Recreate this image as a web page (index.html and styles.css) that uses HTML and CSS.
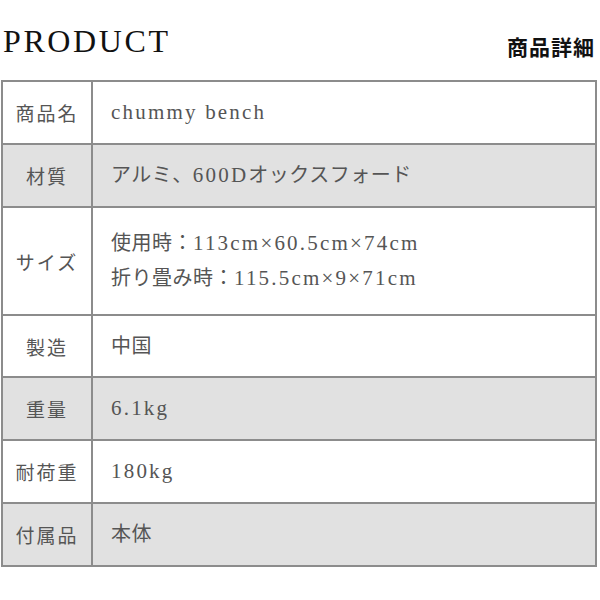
FILE: index.html
```html
<!DOCTYPE html>
<html lang="ja">
<head>
<meta charset="utf-8">
<title>PRODUCT</title>
<link rel="stylesheet" href="styles.css">
</head>
<body>
<header class="head">
  <h1 class="title">PRODUCT</h1>
  <h2 class="subtitle">商品詳細</h2>
</header>
<table class="spec">
  <tr class="row">
    <th class="label">商品名</th>
    <td class="value"><span class="en">chummy bench</span></td>
  </tr>
  <tr class="row alt">
    <th class="label">材質</th>
    <td class="value">アルミ、<span class="en">600D</span>オックスフォード</td>
  </tr>
  <tr class="row tall">
    <th class="label">サイズ</th>
    <td class="value">使用時：<span class="en">113cm×60.5cm×74cm</span><br>折り畳み時：<span class="en">115.5cm×9×71cm</span></td>
  </tr>
  <tr class="row short">
    <th class="label">製造</th>
    <td class="value">中国</td>
  </tr>
  <tr class="row alt">
    <th class="label">重量</th>
    <td class="value"><span class="en">6.1kg</span></td>
  </tr>
  <tr class="row">
    <th class="label">耐荷重</th>
    <td class="value"><span class="en">180kg</span></td>
  </tr>
  <tr class="row alt">
    <th class="label">付属品</th>
    <td class="value">本体</td>
  </tr>
</table>
</body>
</html>
```
FILE: styles.css
```css
html, body {
  margin: 0;
  padding: 0;
  background: #fff;
}
body {
  width: 600px;
  font-family: "Liberation Serif", "Noto Sans CJK JP", serif;
}
.head {
  box-sizing: border-box;
  height: 80px;
  display: flex;
  justify-content: space-between;
  align-items: flex-end;
  padding: 0 5px 23px 3px;
}
.title {
  margin: 0;
  font-size: 32px;
  line-height: 32px;
  font-weight: normal;
  letter-spacing: 2.6px;
  color: #111;
}
.subtitle {
  margin: 0 0 -3px;
  font-size: 21px;
  line-height: 24px;
  font-weight: bold;
  color: #111;
  letter-spacing: 1px;
}
.spec {
  margin-left: 1px;
  width: 596px;
  border-collapse: collapse;
  color: #555;
  font-size: 19px;
  letter-spacing: 2px;
}
.row {
  height: 63px;
}
.row.short {
  height: 62px;
}
.row.tall {
  height: 108px;
}
.row.alt {
  background: #e1e1e1;
}
.label, .value {
  border: 2px solid #8c8c8c;
  font-weight: normal;
  padding: 0;
  vertical-align: middle;
}
.label {
  width: 88px;
  text-align: center;
}
.value {
  text-align: left;
  padding-left: 18px;
  font-size: 20px;
  letter-spacing: 0.5px;
  line-height: 35px;
}
.en {
  font-size: 21px;
  letter-spacing: 2.2px;
}
```
